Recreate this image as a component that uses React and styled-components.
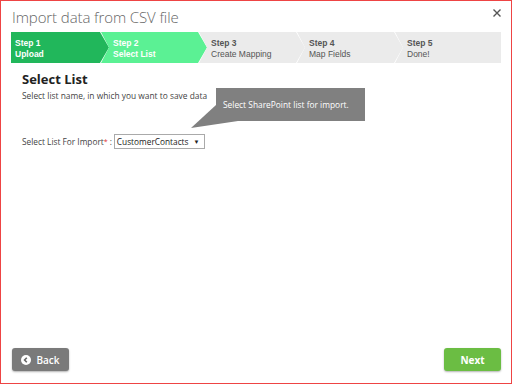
import React from 'react';
import styled, { createGlobalStyle } from 'styled-components';

const GlobalStyle = createGlobalStyle`
  html, body {
    margin: 0;
    padding: 0;
  }
  body {
    font-family: "Open Sans", "Noto Sans", sans-serif;
  }
  * {
    box-sizing: border-box;
  }
`;

const steps = [
  { num: 'Step 1', name: 'Upload', state: 'done' },
  { num: 'Step 2', name: 'Select List', state: 'current' },
  { num: 'Step 3', name: 'Create Mapping', state: 'todo' },
  { num: 'Step 4', name: 'Map Fields', state: 'todo' },
  { num: 'Step 5', name: 'Done!', state: 'todo' },
];

const stepColors = {
  done: '#21b75b',
  current: '#5bf194',
  todo: '#ebebeb',
};

const Dialog = styled.div`
  width: 512px;
  height: 384px;
  border: 1px solid #ee4444;
  background: #fff;
  display: flex;
  flex-direction: column;
  position: relative;
`;

const Header = styled.div`
  display: flex;
  align-items: center;
  justify-content: space-between;
  height: 31px;
  padding: 0 8px 0 11px;
`;

const Title = styled.h1`
  margin: 0;
  font-size: 15px;
  font-weight: 300;
  color: #666;
  letter-spacing: -0.1px;
`;

const Close = styled.button`
  border: 0;
  background: none;
  padding: 0;
  width: 12px;
  height: 12px;
  display: flex;
  align-items: center;
  justify-content: center;
  margin-bottom: 8px;
`;

const StepBar = styled.div`
  display: flex;
  height: 31px;
  margin: 0 10px 0 10px;
`;

const Step = styled.div`
  flex: ${p => (p.$last ? 1 : 'none')};
  width: ${p => (p.$first ? 98 : 106)}px;
  margin-left: ${p => (p.$first ? 0 : -8)}px;
  background: ${p => stepColors[p.$state]};
  color: ${p => (p.$state === 'todo' ? '#555' : '#fff')};
  padding: 6px 0 0 ${p => (p.$first ? 4 : 12)}px;
  font-family: "Liberation Sans", Arial, sans-serif;
  font-size: 8.5px;
  line-height: 11px;
  clip-path: ${p =>
    p.$first
      ? 'polygon(0 0, calc(100% - 9px) 0, 100% 50%, calc(100% - 9px) 100%, 0 100%)'
      : p.$last
      ? 'polygon(0 0, 100% 0, 100% 100%, 0 100%, 8px 50%)'
      : 'polygon(0 0, calc(100% - 9px) 0, 100% 50%, calc(100% - 9px) 100%, 0 100%, 8px 50%)'};
`;

const StepNum = styled.div`
  font-weight: bold;
`;

const StepName = styled.div`
  font-weight: ${p => (p.$active ? 'bold' : 'normal')};
  white-space: nowrap;
`;

const Content = styled.div`
  flex: 1;
  padding: 7px 21px 0;
  position: relative;
`;

const Heading = styled.h2`
  margin: 0;
  font-size: 13px;
  font-weight: bold;
  color: #222;
  line-height: 18px;
`;

const Hint = styled.p`
  margin: 2px 0 0;
  font-size: 8.4px;
  color: #444;
  line-height: 12px;
`;

const Field = styled.div`
  display: flex;
  align-items: center;
  margin-top: 32px;
  font-size: 8.3px;
  color: #444;
`;

const Required = styled.sup`
  color: #e03030;
  font-size: 7px;
  line-height: 0;
`;

const Colon = styled.span`
  margin: 0 2px 0 2px;
`;

const SelectBox = styled.div`
  display: flex;
  align-items: center;
  height: 15px;
  border: 1px solid #aaa;
  padding: 0 4px 0 2px;
  font-size: 8.3px;
  color: #222;
  gap: 5px;
`;

const Caret = styled.span`
  font-size: 6px;
  color: #222;
`;

const Tooltip = styled.div`
  position: absolute;
  left: 215px;
  top: 25px;
  width: 149px;
  height: 33px;
  background: #808080;
  color: #fff;
  font-size: 8.4px;
  display: flex;
  align-items: center;
  padding-left: 7px;
`;

const TooltipTail = styled.svg`
  position: absolute;
  left: -28px;
  top: 17px;
  overflow: visible;
`;

const Footer = styled.div`
  display: flex;
  justify-content: space-between;
  padding: 0 10px 12px 11px;
`;

const Button = styled.button`
  display: flex;
  align-items: center;
  justify-content: center;
  gap: 5px;
  width: 57px;
  height: 23px;
  border: 0;
  border-radius: 3px;
  background: ${p => (p.$primary ? '#6bbd43' : '#7a7a7a')};
  color: #fff;
  font-family: "Open Sans", sans-serif;
  font-size: 10px;
  font-weight: ${p => (p.$primary ? 'bold' : 600)};
  box-shadow: 0 1px 2px rgba(0, 0, 0, 0.3);
  padding: 0;
`;

const BackIcon = () => (
  <svg width="10" height="10" viewBox="0 0 10 10">
    <circle cx="5" cy="5" r="5" fill="#fff" />
    <path d="M5.8 2.8 L3.6 5 L5.8 7.2" stroke="#666" strokeWidth="1.6" fill="none" />
  </svg>
);

export default function App() {
  return (
    <>
      <GlobalStyle />
      <Dialog>
        <Header>
          <Title>Import data from CSV file</Title>
          <Close aria-label="Close">
            <svg width="8" height="8" viewBox="0 0 8 8">
              <path d="M0.5 0.5 L7.5 7.5 M7.5 0.5 L0.5 7.5" stroke="#555" strokeWidth="1.4" />
            </svg>
          </Close>
        </Header>
        <StepBar>
          {steps.map((s, i) => (
            <Step key={s.num} $state={s.state} $first={i === 0} $last={i === steps.length - 1}>
              <StepNum>{s.num}</StepNum>
              <StepName $active={s.state !== 'todo'}>{s.name}</StepName>
            </Step>
          ))}
        </StepBar>
        <Content>
          <Heading>Select List</Heading>
          <Hint>Select list name, in which you want to save data</Hint>
          <Field>
            <span>Select List For Import</span>
            <Required>*</Required>
            <Colon>:</Colon>
            <SelectBox>
              CustomerContacts
              <Caret>▼</Caret>
            </SelectBox>
          </Field>
          <Tooltip>
            Select SharePoint list for import.
            <TooltipTail width="1" height="1">
              <polygon points="28,0 50,16 3,23" fill="#808080" />
            </TooltipTail>
          </Tooltip>
        </Content>
        <Footer>
          <Button>
            <BackIcon />
            Back
          </Button>
          <Button $primary>Next</Button>
        </Footer>
      </Dialog>
    </>
  );
}
